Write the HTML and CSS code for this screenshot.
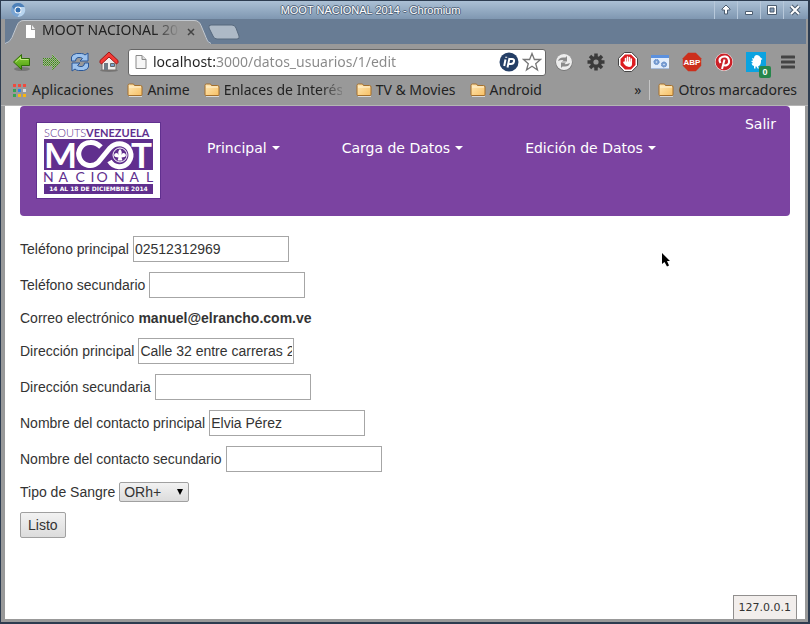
FILE: index.html
```html
<!DOCTYPE html>
<html lang="es">
<head>
<meta charset="utf-8">
<title>MOOT NACIONAL 2014</title>
<link rel="stylesheet" href="styles.css">
</head>
<body>
<svg class="defs" aria-hidden="true">
  <defs>
    <linearGradient id="gold" x1="0" y1="0" x2="1" y2="1"><stop offset="0" stop-color="#ffe9b8"/><stop offset="1" stop-color="#f7bf63"/></linearGradient>
    <linearGradient id="green" x1="0" y1="0" x2="0" y2="1"><stop offset="0" stop-color="#8fd13f"/><stop offset="1" stop-color="#4a9d0c"/></linearGradient>
    <pattern id="dither" width="2" height="2" patternUnits="userSpaceOnUse"><rect width="1" height="1" fill="#3c8a14"/><rect x="1" y="1" width="1" height="1" fill="#5aa52a"/></pattern>
    <symbol id="folder" viewBox="0 0 16 16"><path d="M1 3.500q0-1.500 1.500-1.500h4l1 1.500h6q1.500 0 1.500 1.500v7.500q0 1-1 1h-12q-1 0-1-1z" fill="url(#gold)" stroke="#a46f2c"/><path d="M2 5h12" stroke="#fff3d6"/><path d="M2 14.500h13" stroke="#d8d8d8"/></symbol>
    <symbol id="sheet" viewBox="0 0 12 16"><path d="M1 1.500h6l4 4v9h-10z" fill="#f6f6f6" stroke="#8a8a8a"/><path d="M7 1.500v4h4" fill="#ddd" stroke="#8a8a8a"/></symbol>
  </defs>
</svg>

<div class="window">
  <header class="titlebar">
    <svg class="app-icon" width="16" height="16" viewBox="0 0 16 16"><circle cx="8" cy="8" r="7" fill="#79a4d2"/><path d="M8 1a7 7 0 0 1 6.500 4h-7a3 3 0 0 0-3 3L2 4.400A7 7 0 0 1 8 1z" fill="#4d80b8"/><path d="M14.500 5A7 7 0 0 1 7.500 15l3-5a3 3 0 0 0-1-5z" fill="#b9d5ef"/><circle cx="8" cy="8" r="3.500" fill="#fff"/><circle cx="8" cy="8" r="2.500" fill="#346fb0"/></svg>
    <span class="window-title">MOOT NACIONAL 2014 - Chromium</span>
    <div class="window-buttons">
      <button aria-label="Subir"><svg width="12" height="12" viewBox="0 0 12 12"><path d="M6 1l4 4v1H7.500v4h-3V6H2V5z" fill="#fff" stroke="#4c5d70"/></svg></button>
      <button aria-label="Minimizar"><svg width="12" height="12" viewBox="0 0 12 12"><path d="M2.500 7.500h7v3h-7z" fill="#fff" stroke="#4c5d70"/></svg></button>
      <button aria-label="Maximizar"><svg width="12" height="12" viewBox="0 0 12 12"><path d="M1.500 1.500h9v9h-9z" fill="#fff" stroke="#4c5d70"/><path d="M4 4h4v4H4z" fill="#8299b3" stroke="#4c5d70"/></svg></button>
      <button aria-label="Cerrar"><svg width="12" height="12" viewBox="0 0 12 12"><path d="M2 2l8 8M10 2l-8 8" stroke="#4c5d70" stroke-width="4"/><path d="M2 2l8 8M10 2l-8 8" stroke="#fff" stroke-width="2"/></svg></button>
    </div>
  </header>

  <div class="tabstrip">
    <div class="tab">
      <svg class="tab-shape" width="206" height="25" viewBox="0 0 206 25" preserveAspectRatio="none"><path d="M0 25q5-1 7-6l5-13q2-5 7-5h170q5 0 7 5l5 13q1 5 5 6z" fill="#999"/><path d="M0 24.500q5-1 7-6l5-12q2-5 7-5h170q5 0 7 5l5 12q1 5 5 6" fill="none" stroke="#c3c9d0"/></svg>
      <svg class="tab-icon" width="11" height="13" viewBox="0 0 11 13"><path d="M1 0h5v5h4v8H1z" fill="#fff"/><path d="M7 0l3 4H7z" fill="#eee"/></svg>
      <span class="tab-title">MOOT NACIONAL 2014</span>
      <button class="tab-close" aria-label="Cerrar pestaña"><svg width="8" height="8" viewBox="0 0 8 8"><path d="M1 1l6 6M7 1L1 7" stroke="#444" stroke-width="1.500"/></svg></button>
    </div>
    <button class="new-tab" aria-label="Nueva pestaña"><svg width="32" height="16" viewBox="0 0 32 16"><path d="M3 1h21q3 0 4 3l3 8q1 3-2 3H9q-3 0-4-3L1 4q-1-3 2-3z" fill="#adb9c6" stroke="#56687d"/></svg></button>
  </div>

  <div class="toolbar">
    <button class="nav-button" aria-label="Atrás"><svg width="20" height="20" viewBox="0 0 20 20"><ellipse cx="10" cy="17" rx="8" ry="2" fill="#777"/><path d="M1.500 10L9.500 2.500V6.500h8v7h-8v4z" fill="url(#green)" stroke="#2f6d06"/><path d="M3.500 10l5-4.500v2h8" fill="none" stroke="#c3ea86"/></svg></button>
    <button class="nav-button" aria-label="Adelante"><svg width="20" height="20" viewBox="0 0 20 20" shape-rendering="crispEdges"><path d="M19 10L11 2v4H2v8h9v4z" fill="#a3ab9d"/><path d="M19 10L11 2v4H2v8h9v4z" fill="url(#dither)"/></svg></button>
    <button class="nav-button" aria-label="Recargar"><svg width="20" height="20" viewBox="0 0 20 20"><path d="M1.500 9V5q1-3 5-3.500h5q2 0 3.500 1.500l3-2v8h-8l2.500-2.500Q11 5 8 5.500 5.500 6 5.500 9z" fill="#9dc3ee" stroke="#2b5797"/><path d="M18.500 11v4q-1 3-5 3.500h-5q-2 0-3.500-1.500l-3 2v-8h8l-2.500 2.500Q9 15 12 14.500q2.500-.5 2.500-3.500z" fill="#9dc3ee" stroke="#2b5797"/></svg></button>
    <button class="nav-button" aria-label="Inicio"><svg width="20" height="20" viewBox="0 0 20 20"><ellipse cx="10" cy="18.500" rx="9" ry="1.500" fill="#777"/><path d="M3 9l7-7 7 7v9H3z" fill="#f0efec" stroke="#77716c"/><path d="M1 10.500V8.500L10 0l9 8.500v2L17.500 12 10 5l-7.500 7z" fill="#f33b36" stroke="#9d1717"/><path d="M5 11h4v7H5z" fill="#6d7b85"/><path d="M11.500 11.500h4v3h-4z" fill="#79a3d0" stroke="#666"/></svg></button>
    <div class="omnibox">
      <svg width="14" height="16" viewBox="0 0 12 16"><use href="#sheet"/></svg>
      <input class="url" type="text" aria-label="Dirección" value="localhost:3000/datos_usuarios/1/edit">
      <svg width="20" height="20" viewBox="0 0 20 20"><circle cx="10" cy="10" r="9.500" fill="#253f66"/><path d="M6.500 7.500L5.200 14M7.200 4.800v1" stroke="#fff" stroke-width="2"/><path d="M10.500 6L8.500 15.500M10 7h3q2.500 0 2 2.500T12 12H9.500" fill="none" stroke="#fff" stroke-width="2"/></svg>
      <svg width="20" height="20" viewBox="0 0 20 20"><path d="M10 1.500l2.400 6h6.100l-4.800 4.200 1.800 6.300L10 14.300 4.500 18l1.800-6.300L1.500 7.500h6.100z" fill="#fff" stroke="#777" stroke-width="1.300"/></svg>
    </div>
    <button class="extension" aria-label="Sincronizar"><svg width="20" height="20" viewBox="0 0 20 20"><circle cx="10" cy="10.500" r="8.500" fill="#777"/><circle cx="10" cy="10" r="8" fill="#ededed"/><path d="M4 9q1-3.500 5-3.500h2.500L13 4v5.500H8L9.500 8Q7 7.500 4 9zM16 11q-1 3.500-5 3.500H8.500L7 16v-5.500h5L10.500 12q2.500.5 5.500-1z" fill="#8b8b8b"/></svg></button>
    <button class="extension" aria-label="Ajustes"><svg width="20" height="20" viewBox="0 0 20 20"><path d="M10 1.500v17M1.500 10h17M4 4l12 12M16 4L4 16" stroke="#3b3b3b" stroke-width="3.500"/><circle cx="10" cy="10" r="6" fill="#3b3b3b"/><circle cx="10" cy="10" r="2.600" fill="#999"/></svg></button>
    <button class="extension" aria-label="Bloqueador"><svg width="20" height="20" viewBox="0 0 20 20"><path d="M6.300.5h7.400l5.800 5.800v7.400l-5.800 5.800H6.300L.5 13.700V6.300z" fill="#fff" stroke="#444"/><path d="M7 2.500h6L17.500 7v6L13 17.500H7L2.500 13V7z" fill="#dc1c20"/><path d="M7.500 11V6.500M9.500 10V5M11.500 10V5.500M13.300 11V7" stroke="#fff" stroke-width="1.500" stroke-linecap="round"/><path d="M6.800 9.500H14V12q0 3-3 3T6 12l-1-2 1-.5z" fill="#fff"/></svg></button>
    <button class="extension" aria-label="Ventana"><svg width="20" height="20" viewBox="0 0 20 20"><path d="M1 3h18v14H1z" fill="#e2edfb"/><path d="M1 3h18v3H1z" fill="#5c91de"/><path d="M1 16.500h18" stroke="#a7bddd"/><circle cx="6.500" cy="10" r="1.800" fill="none" stroke="#7b9fd3" stroke-width="2"/><circle cx="6.500" cy="10" r="2.500" fill="none" stroke="#5c87c5" stroke-dasharray="1 1"/><circle cx="14" cy="12.500" r="1.800" fill="none" stroke="#7b9fd3" stroke-width="2"/><circle cx="14" cy="12.500" r="2.500" fill="none" stroke="#5c87c5" stroke-dasharray="1 1"/></svg></button>
    <button class="extension" aria-label="ABP"><svg width="20" height="20" viewBox="0 0 20 20"><path d="M6.200.8h7.600l5.400 5.400v7.600l-5.400 5.400H6.200L.8 13.800V6.200z" fill="#cc2f1c"/><text x="10" y="13" class="abp">ABP</text></svg></button>
    <button class="extension" aria-label="Pinterest"><svg width="20" height="20" viewBox="0 0 20 20"><circle cx="10" cy="10" r="9" fill="#fff"/><circle cx="10" cy="10" r="8.500" fill="#cb2027"/><path d="M6.500 11Q4.500 8 6.500 6t5-1.500 3.500 4-2 4.500-3.300-.3M10.500 7.500L8 17" fill="none" stroke="#fff" stroke-width="2"/></svg></button>
    <button class="extension twitter" aria-label="Twitter"><svg width="20" height="20" viewBox="0 0 20 20"><path d="M0 0h20v20H0z" fill="#0ba3e0"/><path d="M5 9l2-.5L6 6l2 .5Q8 3 11 3q2.500 0 3.500 2.500L16.500 7 15 8q.5 5-3 6.500l1 2h-1.500l-1-2h-1v2H8v-2.500q-2-.5-2.500-2.500L7 11z" fill="#fff"/></svg><span class="badge">0</span></button>
    <button class="extension" aria-label="Menú"><svg width="14" height="16" viewBox="0 0 14 16"><path d="M1 3h12M1 8h12M1 13h12" stroke="#444" stroke-width="3" stroke-linecap="round"/></svg></button>
  </div>

  <nav class="bookmarks" aria-label="Marcadores">
    <a href="#"><svg width="16" height="16" viewBox="0 0 16 16"><path d="M1 2h3v3H1zM6 2h3v3H6zM11 2h3v3h-3z" fill="#ef4b3f"/><path d="M1 7h3v3H1zM1 12h3v3H1z" fill="#35a454"/><path d="M6 7h3v3H6z" fill="#2e83e6"/><path d="M11 7h3v3h-3z" fill="#ddd"/><path d="M6 12h3v3H6zM11 12h3v3h-3z" fill="#f7b512"/></svg>Aplicaciones</a>
    <a href="#"><svg width="16" height="16"><use href="#folder"/></svg>Anime</a>
    <a href="#"><svg width="16" height="16"><use href="#folder"/></svg><span class="fade">Enlaces de Interés</span></a>
    <a href="#"><svg width="16" height="16"><use href="#folder"/></svg>TV &amp; Movies</a>
    <a href="#"><svg width="16" height="16"><use href="#folder"/></svg>Android</a>
    <button class="more" aria-label="Más marcadores">»</button>
    <a class="other" href="#"><svg width="16" height="16"><use href="#folder"/></svg>Otros marcadores</a>
  </nav>

  <main class="page">
    <div class="site-header">
      <svg class="logo" width="125" height="77" viewBox="0 0 125 77" role="img" aria-label="Scouts Venezuela Moot Nacional">
        <rect x=".5" y=".5" width="124" height="76" fill="#fff" stroke="#61308f"/>
        <text x="8" y="15" class="logo-scouts">SCOUTS<tspan class="logo-venezuela">VENEZUELA</tspan></text>
        <rect x="8" y="17" width="109" height="31" fill="#602f8e"/>
        <text x="8" y="46" class="logo-moot">M</text>
        <path d="M65 25Q60 20 54 20.500a11.500 11.500 0 1 0 8 20L74 26q5-5 12-4a11.500 11.500 0 1 1-12.500 17" fill="none" stroke="#fff" stroke-width="5"/>
        <circle cx="84" cy="33" r="7" fill="#602f8e" stroke="#fff"/>
        <path d="M84 27q3 3 1 6 2-3 4-1.500 2 2-.5 3.500l-3 .5 1 3h-5l1-3-3-.5q-2.500-1.500-.5-3.500 2-1.500 4 1.500-2-3 1-6z" fill="#fff"/>
        <text x="95" y="46" class="logo-moot">T</text>
        <text y="60" x="7 22.500 39.500 54.500 60.500 78 93.500 110" class="logo-nacional">NACIONAL</text>
        <rect x="8" y="62" width="109" height="10" fill="#602f8e"/>
        <text x="62.500" y="69" class="logo-date">14 AL 18 DE DICIEMBRE 2014</text>
      </svg>
      <nav class="menu" aria-label="Principal">
        <a href="#">Principal<span class="caret"></span></a>
        <a href="#">Carga de Datos<span class="caret"></span></a>
        <a href="#">Edición de Datos<span class="caret"></span></a>
      </nav>
      <a class="logout" href="#">Salir</a>
    </div>

    <form class="form">
      <div class="row"><label for="tel1">Teléfono principal</label><input id="tel1" type="text" value="02512312969"></div>
      <div class="row"><label for="tel2">Teléfono secundario</label><input id="tel2" type="text"></div>
      <div class="row"><span>Correo electrónico</span><strong>manuel@elrancho.com.ve</strong></div>
      <div class="row"><label for="dir1">Dirección principal</label><input id="dir1" type="text" value="Calle 32 entre carreras 23"></div>
      <div class="row"><label for="dir2">Dirección secundaria</label><input id="dir2" type="text"></div>
      <div class="row"><label for="con1">Nombre del contacto principal</label><input id="con1" type="text" value="Elvia Pérez"></div>
      <div class="row"><label for="con2">Nombre del contacto secundario</label><input id="con2" type="text"></div>
      <div class="row"><label for="sangre">Tipo de Sangre</label><span class="select"><select id="sangre"><option>ORh+</option></select></span></div>
      <div class="row"><button class="submit" type="button">Listo</button></div>
    </form>
    <div class="status">127.0.0.1</div>
  </main>
  <svg class="pointer" width="10" height="16" viewBox="0 0 10 16" aria-hidden="true"><path d="M1 1v11l2.500-2L6 14.500l2-1L6 9h3z" fill="#000"/></svg>
</div>
</body>
</html>
```
FILE: styles.css
```css
* { box-sizing: border-box; }

body {
  margin: 0;
  font: 14px/20px "Liberation Sans", sans-serif;
  color: #333;
}

button {
  padding: 0;
  border: 0;
  background: none;
  font: inherit;
  color: inherit;
}

a { color: inherit; text-decoration: none; }
svg { display: block; flex: none; }
.defs { position: absolute; width: 0; height: 0; }

.window {
  position: relative;
  display: flex;
  flex-direction: column;
  min-height: 100vh;
  border: 1px solid #2d3c50;
  border-width: 1px 2px 2px 1px;
  background: #999;
}

/* Window frame */
.titlebar {
  display: grid;
  grid-template-columns: 28px 1fr 96px;
  align-items: center;
  height: 18px;
  background: linear-gradient(#abc0d5, #7f97b1);
}
.app-icon { margin-left: 9px; }
.window-title {
  justify-self: center;
  font-size: 11px;
  line-height: 16px;
  color: #fff;
  text-shadow: 1px 0 #52657c, -1px 0 #52657c, 0 1px #52657c, 0 -1px #52657c;
}
.window-buttons { display: flex; justify-content: flex-end; padding-right: 2px; }
.window-buttons button {
  display: grid;
  place-items: center;
  width: 23px;
  height: 18px;
  border-left: 1px solid #b7c8da;
}

.tabstrip {
  display: flex;
  align-items: center;
  height: 25px;
  margin: 0 2px 0 4px;
  background: #687c94;
}
.tab {
  position: relative;
  display: flex;
  align-items: center;
  width: 206px;
  height: 25px;
  padding-left: 20px;
}
.tab-shape { position: absolute; left: 0; top: 0; }
.tab-icon, .tab-title, .tab-close { position: relative; }
.tab-title {
  width: 138px;
  margin: 0 7px 4px 6px;
  overflow: hidden;
  white-space: nowrap;
  font: 14px/20px "Noto Sans", sans-serif;
  color: #222;
  mask-image: linear-gradient(90deg, #000 112px, transparent 138px);
}
.new-tab { margin-left: -3px; }

/* Toolbar */
.toolbar {
  display: flex;
  align-items: center;
  height: 36px;
  padding: 0 4px 0 6px;
}
.nav-button { display: grid; place-items: center; width: 29px; height: 28px; }
.omnibox {
  display: flex;
  align-items: center;
  gap: 3px;
  flex: 1;
  min-width: 0;
  height: 27px;
  margin: 0 2px 0 5px;
  padding: 0 3px 0 5px;
  border: 1px solid #666;
  border-radius: 3px;
  background: #fff;
}
.url {
  flex: 1;
  min-width: 0;
  padding: 0 0 0 2px;
  border: 0;
  outline: 0;
  font: 14px/20px "Noto Sans", sans-serif;
  background: linear-gradient(90deg, #222 65px, #888 65px) text;
  -webkit-text-fill-color: transparent;
}
.extension { display: grid; place-items: center; width: 32px; height: 28px; }
.abp {
  font: bold 8px "Liberation Sans", sans-serif;
  fill: #fff;
  text-anchor: middle;
}
.twitter { position: relative; }
.badge {
  position: absolute;
  right: 1px;
  bottom: -2px;
  width: 12px;
  border-radius: 2px;
  background: #26864b;
  font: bold 9px/12px "Liberation Sans", sans-serif;
  color: #fff;
}

.bookmarks {
  display: flex;
  align-items: center;
  gap: 14px;
  height: 26px;
  padding: 0 11px 6px 11px;
  border-bottom: 1px solid #b5b5b5;
  font: 14px/20px "Noto Sans", sans-serif;
  color: #222;
  white-space: nowrap;
}
.bookmarks a { display: flex; align-items: center; gap: 4px; }
.fade {
  width: 118px;
  overflow: hidden;
  mask-image: linear-gradient(90deg, #000 96px, transparent 124px);
}
.more { margin-left: auto; margin-right: -6px; }
.bookmarks .other { padding-left: 8px; border-left: 1px solid #c5c5c5; }

/* Page */
.page {
  position: relative;
  flex: 1;
  margin: 0 3px 3px 4px;
  padding: 0 15px;
  background: #fff;
}
.site-header {
  display: flex;
  align-items: flex-start;
  min-height: 110px;
  padding: 0 14px 0 16px;
  border-radius: 4px;
  background: #7b43a1;
  font: 14px/20px "DejaVu Sans", sans-serif;
  color: #fff;
}
.logo { margin-top: 16px; }
.menu { display: flex; gap: 62px; margin: 32px auto 0 46px; }
.menu a { display: flex; align-items: center; gap: 5px; }
.caret {
  border: 4px solid transparent;
  border-top-color: #fff;
  border-bottom: 0;
}
.logout { margin-top: 8px; }

.logo-scouts { font: 300 11px Lato, sans-serif; fill: #602f8e; }
.logo-venezuela { font-weight: 700; }
.logo-moot { font: bold 35px Lato, sans-serif; fill: #fff; }
.logo-nacional { font: 14px Lato, sans-serif; fill: #602f8e; }
.logo-date { font: bold 6px "DejaVu Sans", sans-serif; fill: #fff; text-anchor: middle; }

.form { display: flex; flex-direction: column; gap: 10px; padding: 20px 0; }
.row { display: flex; align-items: center; gap: 4px; }
.row input {
  width: 156px;
  height: 26px;
  padding: 1px;
  border: 1px solid #a6a6a6;
  font: inherit;
  color: inherit;
}
.select { position: relative; }
.select::after {
  content: "";
  position: absolute;
  right: 6px;
  top: 7px;
  border: 3px solid transparent;
  border-top: 6px solid #000;
  border-bottom: 0;
}
.select select {
  display: block;
  appearance: none;
  width: 70px;
  height: 20px;
  padding: 0 4px;
  border: 1px solid #a0a0a0;
  border-radius: 2px;
  background: linear-gradient(#f2f2f2, #dcdcdc);
  font: inherit;
  line-height: 18px;
  color: inherit;
}
.submit {
  height: 26px;
  padding: 0 7px;
  border: 1px solid #a0a0a0;
  border-radius: 2px;
  background: linear-gradient(#f2f2f2, #dcdcdc);
}

.status {
  position: absolute;
  right: 8px;
  bottom: 0;
  padding: 1px 5px;
  border: 1px solid #918f8e;
  border-bottom: 0;
  background: #f2eeec;
  font: 11px/21px "DejaVu Sans", sans-serif;
}
.pointer { position: absolute; left: 660px; top: 251px; }
```
